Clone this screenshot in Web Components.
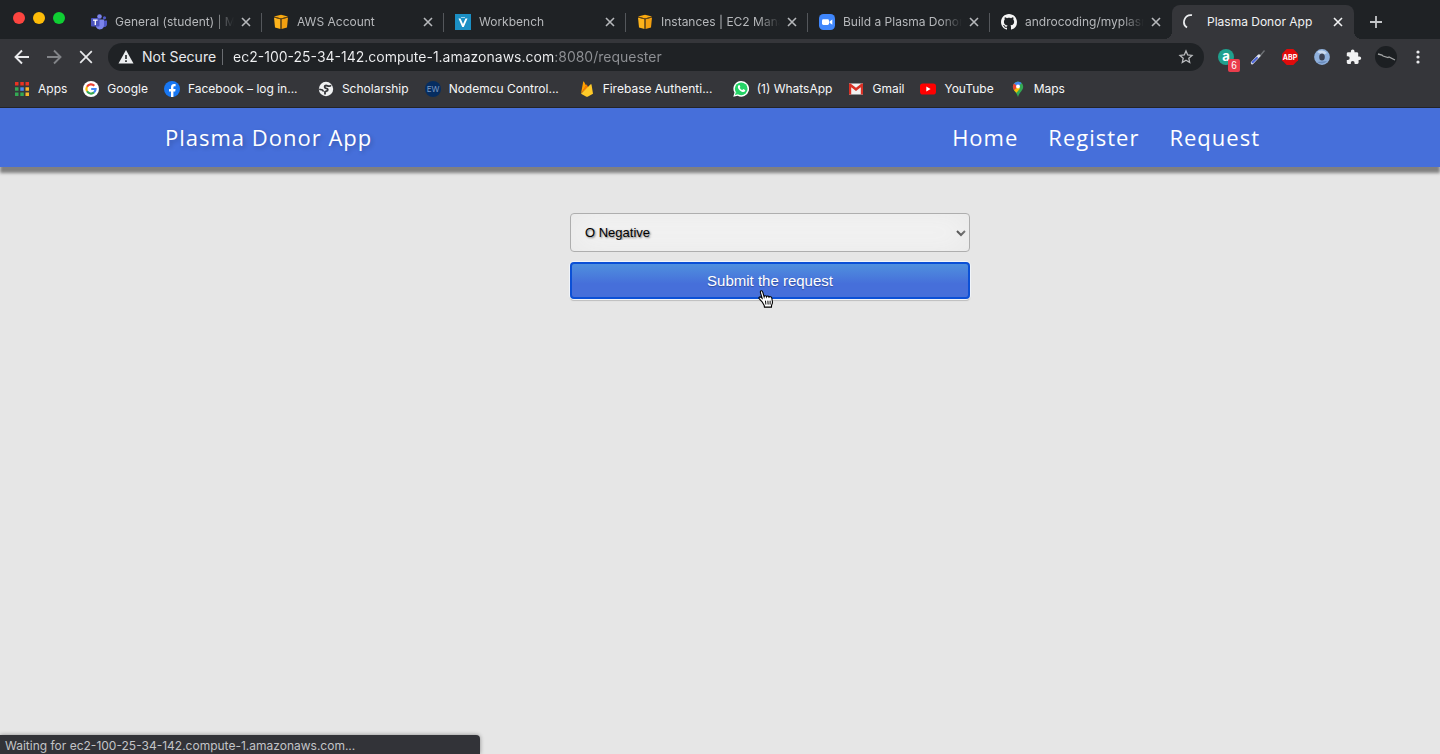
<!DOCTYPE html>
<html lang="en">
<head>
<meta charset="utf-8">
<title>Plasma Donor App</title>
<style>
html, body { margin: 0; height: 100%; }
body { background: #e6e6e6; font-family: Inter, "Liberation Sans", sans-serif; overflow: hidden; }
</style>
</head>
<body>
<browser-window></browser-window>

<template id="t-window">
<style>
:host { display: flex; flex-direction: column; min-height: 100vh; position: relative; }
site-page { flex: 1; }
status-bubble { position: absolute; left: 0; bottom: 0; width: calc(100% / 3); }
</style>
<tab-strip></tab-strip>
<tool-bar></tool-bar>
<bookmark-bar></bookmark-bar>
<site-page></site-page>
<status-bubble>Waiting for ec2-100-25-34-142.compute-1.amazonaws.com...</status-bubble>
</template>

<template id="t-strip">
<style>
:host { display: flex; height: 39px; background: #1f2225; padding-left: 10px; align-items: stretch; }
.lights { display: flex; gap: 8px; width: 70px; padding: 12px 0 0 3px; box-sizing: border-box; flex: none; }
.lights i { width: 12px; height: 12px; border-radius: 50%; background: var(--c); }
button { border: 0; background: none; padding: 0; width: 44px; display: grid; place-items: center; color: #c4c6c9; padding-top: 5px; }
</style>
<div class="lights"><i style="--c:#fc4540"></i><i style="--c:#fdbc08"></i><i style="--c:#0fce33"></i></div>
<browser-tab icon="teams">General (student) | M</browser-tab>
<browser-tab icon="aws">AWS Account</browser-tab>
<browser-tab icon="workbench">Workbench</browser-tab>
<browser-tab icon="aws">Instances | EC2 Mana</browser-tab>
<browser-tab icon="zoom">Build a Plasma Donor</browser-tab>
<browser-tab icon="github" last>androcoding/myplasm</browser-tab>
<browser-tab icon="spin" active>Plasma Donor App</browser-tab>
<button aria-label="New tab"><svg width="14" height="14" viewBox="0 0 14 14" stroke="currentColor" stroke-width="1.8"><path d="M7 1v12M1 7h12"/></svg></button>
</template>

<template id="t-tab">
<style>
:host { display: block; flex: 0 1 182px; min-width: 0; color: #b6b8bb; font-size: 12px; position: relative; }
.tab { display: flex; align-items: center; height: 34px; margin-top: 5px; padding: 0 8px 0 11px; box-sizing: border-box; position: relative; }
.tab::after { content: ""; position: absolute; right: 0; top: 8px; height: 19px; width: 1px; background: #54575b; }
:host([last]) .tab::after, :host([active]) .tab::after { display: none; }
:host([active]) { color: #f1f2f3; }
:host([active]) .tab { background: #35363a; border-radius: 8px 8px 0 0; }
:host([active])::before, :host([active])::after { content: ""; position: absolute; bottom: 0; width: 8px; height: 8px; }
:host([active])::before { left: -8px; background: radial-gradient(circle at 0 0, transparent 8px, #35363a 8px); }
:host([active])::after { right: -8px; background: radial-gradient(circle at 100% 0, transparent 8px, #35363a 8px); }
.title { flex: 1; min-width: 0; margin: 0 4px 0 8px; white-space: nowrap; overflow: hidden; line-height: 18px;
  -webkit-mask-image: linear-gradient(to right, #000 calc(100% - 22px), transparent); mask-image: linear-gradient(to right, #000 calc(100% - 22px), transparent); }
:host([active]) .title { -webkit-mask-image: none; mask-image: none; }
button { border: 0; background: none; padding: 0; color: inherit; width: 16px; height: 16px; display: grid; place-items: center; }
</style>
<div class="tab"><app-icon></app-icon><span class="title"><slot></slot></span>
<button aria-label="Close tab"><svg width="10" height="10" viewBox="0 0 10 10" stroke="currentColor" stroke-width="1.6"><path d="M1 1l8 8M9 1L1 9"/></svg></button></div>
</template>

<template id="t-tool">
<style>
:host { display: flex; align-items: center; height: 36px; background: #35363a; padding: 0 6px; }
button { border: 0; background: none; padding: 0; width: 32px; height: 32px; display: grid; place-items: center; color: #e9eaec; flex: none; position: relative; }
.dim { color: #828488; }
.box { flex: 1; min-width: 0; display: flex; align-items: center; height: 28px; border-radius: 14px; background: #1f2225; margin: 0 6px; color: #e8eaed; font-size: 14px; line-height: 20px; }
.warn { margin: 0 8px 0 10px; flex: none; }
.bar { width: 1px; height: 16px; background: #6a6d71; margin: 0 10px 0 6px; flex: none; }
.sec { white-space: nowrap; }
input { flex: 1; min-width: 0; height: 20px; border: 0; padding: 0; outline: 0; font: inherit; color: #f1f2f4;
  background: linear-gradient(90deg, #f1f2f4 322px, #8f9195 322px); -webkit-background-clip: text; background-clip: text; -webkit-text-fill-color: transparent; }
.box button { width: 36px; height: 28px; }
.badge { position: absolute; right: 2px; bottom: 1px; width: 12px; height: 13px; border-radius: 2px; background: #ea3d4c; color: #fff; font-size: 10px; line-height: 13px; text-align: center; }
</style>
<button aria-label="Back"><svg width="16" height="16" viewBox="0 0 16 16" fill="none" stroke="currentColor" stroke-width="1.9"><path d="M15 8H2M8 1.500L1.500 8 8 14.500"/></svg></button>
<button class="dim" aria-label="Forward"><svg width="16" height="16" viewBox="0 0 16 16" fill="none" stroke="currentColor" stroke-width="1.900"><path d="M1 8h13M8 1.500L14.500 8 8 14.500"/></svg></button>
<button aria-label="Stop loading"><svg width="14" height="14" viewBox="0 0 14 14" stroke="currentColor" stroke-width="1.700"><path d="M1.200 1.200l11.600 11.600M12.800 1.200L1.200 12.800"/></svg></button>
<div class="box">
<svg class="warn" width="16" height="14" viewBox="0 0 16 14"><path fill="#eceef0" d="M8 0l7.500 13.500H.5z"/><path stroke="#1f2225" stroke-width="1.600" d="M8 5v4M8 10.300v1.600"/></svg>
<span class="sec">Not Secure</span><span class="bar"></span>
<input type="text" aria-label="Address" spellcheck="false" value="ec2-100-25-34-142.compute-1.amazonaws.com:8080/requester">
<button aria-label="Bookmark this page"><svg width="16" height="16" viewBox="0 0 16 16" fill="none" stroke="#b9bbbe" stroke-width="1.300"><path d="M8 2l1.700 4 4.300.4-3.200 2.900.9 4.200L8 11.300l-3.700 2.200.9-4.200L2 6.400 6.300 6z"/></svg></button>
</div>
<button aria-label="Amazon Assistant"><app-icon name="assistant"></app-icon><span class="badge">6</span></button>
<button aria-label="Color picker"><app-icon name="dropper"></app-icon></button>
<button aria-label="Adblock Plus"><app-icon name="abp"></app-icon></button>
<button aria-label="Ring extension"><app-icon name="ring"></app-icon></button>
<button aria-label="Extensions"><app-icon name="puzzle"></app-icon></button>
<button aria-label="Profile"><svg width="22" height="22" viewBox="0 0 22 22"><circle cx="11" cy="11" r="11" fill="#1c1f22"/><path d="M3 8l4 1 1 1 5 1.500 1-.5 6 3" fill="none" stroke="#a2a4a5" stroke-width="1.300"/></svg></button>
<button aria-label="Menu"><svg width="4" height="14" viewBox="0 0 4 14" fill="currentColor"><circle cx="2" cy="2" r="1.600"/><circle cx="2" cy="7" r="1.600"/><circle cx="2" cy="12" r="1.600"/></svg></button>
</template>

<template id="t-bookmarks">
<style>
:host { display: flex; height: 33px; background: #35363a; padding: 0 14px 5px; box-sizing: border-box; gap: 16px; align-items: center; border-bottom: 1px solid #232427; overflow: hidden; }
</style>
<book-mark icon="apps">Apps</book-mark>
<book-mark icon="google">Google</book-mark>
<book-mark icon="facebook" long>Facebook – log in...</book-mark>
<book-mark icon="globe">Scholarship</book-mark>
<book-mark icon="ew" long>Nodemcu Control...</book-mark>
<book-mark icon="firebase" long>Firebase Authenti...</book-mark>
<book-mark icon="whatsapp">(1) WhatsApp</book-mark>
<book-mark icon="gmail">Gmail</book-mark>
<book-mark icon="youtube">YouTube</book-mark>
<book-mark icon="maps">Maps</book-mark>
</template>

<template id="t-bookmark">
<style>
:host { display: block; flex: none; font-size: 12px; }
:host([long]) { width: 138px; }
a { display: flex; align-items: center; gap: 8px; color: #f6f7f8; text-decoration: none; line-height: 18px; white-space: nowrap; }
</style>
<a href="#"><app-icon></app-icon><span><slot></slot></span></a>
</template>

<template id="t-site">
<style>
:host { display: block; background: #e6e6e6; }
header { display: flex; justify-content: space-between; align-items: center; height: 59px; padding: 0 calc(12.500% - 15px) 2px; background: #466fda; box-shadow: 0 6px 3px #808080; font: 22px/30px "Open Sans", "Noto Sans", sans-serif; letter-spacing: 1px; box-sizing: border-box; }
a { color: #fff; text-decoration: none; }
.brand { text-shadow: 2px 2px 4px rgba(0,0,0,.2); }
nav { display: flex; gap: 30px; padding-right: 15px; }
main { padding: 46px 0 0 100px; }
form { display: grid; gap: 10px; width: 400px; margin: 0 auto; }
select { appearance: none; height: 39px; border: 1px solid #aeaeae; border-radius: 4px; padding: 0 14px; width: 100%; box-shadow: inset 0 0 30px #e8e8e8; font: 13px "Liberation Sans", Arial, sans-serif; color: #000; text-shadow: 1px 1px 2px rgba(0,0,0,.5);
  background: #f3f3f3 url("data:image/svg+xml,%3Csvg xmlns='http://www.w3.org/2000/svg' width='10' height='8' viewBox='0 0 10 8'%3E%3Cpath d='M1 2l4 4 4-4' fill='none' stroke='%23000' stroke-width='2'/%3E%3C/svg%3E") no-repeat right 3px center; }
button { height: 37px; border: 2px solid #0b50d6; border-radius: 4px; background: linear-gradient(#4f90de, #466fda 60%); color: #fff; font: 15px "Liberation Sans", Arial, sans-serif; padding: 0; box-shadow: 0 0 0 1px #f1f5fa, 0 2px 1px #bdbdbd; text-shadow: 0 1px 1px rgba(0,0,0,.3); }
.submit { position: relative; display: grid; }
.cursor { position: absolute; left: 187px; top: 27px; }
</style>
<header><a class="brand" href="#">Plasma Donor App</a><nav><a href="#">Home</a><a href="#">Register</a><a href="#">Request</a></nav></header>
<main><form>
<select aria-label="Blood group"><option>O Negative</option><option>O Positive</option><option>A Positive</option><option>B Positive</option></select>
<div class="submit"><button type="button">Submit the request</button>
<svg class="cursor" width="18" height="20" viewBox="0 0 16 18"><path d="M4.500 11.500L2 8.800c-1-1 .4-2.200 1.500-1.300l1 .8L3 3.200C2.600 1.300 4.600 1 5 2.600L6.300 7c.3-1.300 2-1.200 2.200 0 .5-1.100 2-.8 2.200.3.700-.8 2.200-.5 2.500.8l.6 3.400c.2 1.400-.5 2.200-.8 3.200l-.1 1.600H6.600l-.2-1.400z" fill="#fff" stroke="#000" stroke-width="1"/><path d="M7.500 10.500l.4 3.500M9.700 10.500l.2 3.500M11.700 10.500v3.500" stroke="#000" stroke-width=".9"/></svg></div>
</form></main>
</template>

<template id="t-status">
<style>
:host { display: block; background: #323338; color: #c3c4c7; font-size: 12px; height: 19px; padding: 2px 5px 0; box-sizing: border-box; border-top-right-radius: 4px; box-shadow: 0 0 4px rgba(0,0,0,.4); white-space: nowrap; }
span { display: block; line-height: 17px; }
</style>
<span role="status"><slot></slot></span>
</template>

<script>
const ICONS = {
teams: '<circle cx="8.500" cy="2.500" r="2.300" fill="#7b83eb"/><circle cx="13.500" cy="3.800" r="1.600" fill="#5059c9"/><path fill="#5059c9" d="M11 6.500h5v4a2.500 2.500 0 0 1-4 2z"/><path fill="#7b83eb" d="M5 5.500h8v6a4.200 4.200 0 0 1-8 1.500z"/><rect y="4" width="8.500" height="8.500" rx="1" fill="#4b53bc"/><path stroke="#fff" stroke-width="1.300" d="M2 6.200h4.600M4.300 6v5"/>',
aws: '<path fill="#f9a90f" d="M1 2.500L8 .8l7 1.700L8 4.500z"/><path fill="#fdb31b" d="M1 3.500l6.500 1.700V15L2 13.600z"/><path fill="#f3a010" d="M15 3.500L8.500 5.200V15l5.500-1.400z"/><path d="M1 3l7 2 7-2M8 5v10" fill="none" stroke="#6b4712" stroke-width=".9"/>',
workbench: '<rect width="16" height="16" fill="#1b8fc4"/><path d="M3.500 4.500h2L8 10l2.500-5.500h2L8.800 13H7.200z" fill="#fff"/><path d="M6 3.500h4" stroke="#9fd3ee"/>',
zoom: '<rect width="16" height="16" rx="4.500" fill="#3f86fb"/><rect x="3" y="5.200" width="7" height="5.800" rx="1.400" fill="#fff"/><path d="M10.500 7.500L13.300 5.500v5.200L10.500 8.800z" fill="#fff"/>',
github: '<path fill="#f5f5f5" d="M8 0C3.580 0 0 3.580 0 8c0 3.540 2.290 6.530 5.470 7.590.4.070.55-.17.55-.38 0-.19-.01-.82-.01-1.490-2.010.37-2.530-.49-2.690-.94-.09-.23-.48-.94-.82-1.130-.28-.15-.68-.52-.01-.53.63-.01 1.080.58 1.230.82.72 1.210 1.870.87 2.330.66.07-.52.28-.87.51-1.070-1.780-.2-3.640-.89-3.640-3.950 0-.87.31-1.590.82-2.150-.08-.2-.36-1.020.08-2.120 0 0 .67-.21 2.200.82.64-.18 1.320-.27 2-.27s1.360.09 2 .27c1.530-1.040 2.200-.82 2.200-.82.44 1.100.16 1.920.08 2.120.51.56.82 1.270.82 2.150 0 3.070-1.870 3.750-3.650 3.950.29.25.54.73.54 1.480 0 1.070-.01 1.930-.01 2.200 0 .21.15.46.55.38A8.010 8.010 0 0 0 16 8c0-4.420-3.580-8-8-8z"/>',
spin: '<path d="M4 13.500A6.800 6.800 0 0 1 9 1.200" fill="none" stroke="#eceef0" stroke-width="1.700"/>',
apps: '<g><path fill="#ea3323" d="M1 1h3.500v3.500H1zM6.300 1h3.500v3.500H6.300zM11.500 1H15v3.500h-3.500z"/><path fill="#34a853" d="M1 6.300h3.500v3.500H1zM1 11.500h3.500V15H1zM6.300 11.500h3.500V15H6.300z"/><path fill="#4a8af4" d="M6.300 6.300h3.500v3.500H6.300z"/><path fill="#f8b52a" d="M11.500 6.300H15v3.500h-3.500zM11.500 11.500H15V15h-3.500z"/></g>',
google: '<circle cx="8" cy="8" r="8" fill="#fff"/><g fill="none" stroke-width="2.200"><path stroke="#ea4335" d="M11.300 4.700A4.600 4.600 0 0 0 4 5.700"/><path stroke="#fbbc05" d="M4 5.700a4.700 4.700 0 0 0 0 4.600"/><path stroke="#34a853" d="M4 10.300a4.600 4.600 0 0 0 7 1.100"/><path stroke="#4285f4" d="M11 11.400A4.600 4.600 0 0 0 12.600 8H8.200"/></g>',
facebook: '<circle cx="8" cy="8" r="8" fill="#1877f2"/><path fill="#fff" d="M7 16v-5.600H5V8h2V6.300c0-2.100 1.200-3.200 3-3.200.8 0 1.600.1 1.600.1v2h-1c-.9 0-1.200.6-1.200 1.200V8h2.200l-.4 2.400H9.400V16z"/>',
globe: '<circle cx="8" cy="8" r="7.200" fill="#f0f1f2"/><path d="M13 4.200c-1.500 2-3.500.2-5 .3-2 .2-1.800 2.500.2 2.800 2.300.2 2 2.600.2 2.800L7 10.800v2.700" fill="none" stroke="#35363a" stroke-width="1.800"/><path d="M1.200 8.200l3.200.8 1.200 1.500" fill="none" stroke="#35363a" stroke-width="1.500"/>',
ew: '<circle cx="8" cy="8" r="8" fill="#062d60"/><text x="8" y="11" text-anchor="middle" font-family="Inter" font-size="8" fill="#7e9ac0">EW</text>',
firebase: '<path fill="#ffa000" d="M2 12.500L4.200.8c.1-.5.6-.5.8-.1L7.200 4.800z"/><path fill="#f57c00" d="M9.300 6.500L7.600 3.200 2 12.500z"/><path fill="#ffca28" d="M14 12.700L12.500 3.500c-.1-.4-.5-.5-.8-.2L2 12.700l5.400 3c.4.200.8.200 1.200 0z"/>',
whatsapp: '<path fill="#fff" d="M8.200 0A7.700 7.700 0 0 0 1.500 11.600L.3 15.800l4.300-1.100A7.800 7.800 0 1 0 8.200 0z"/><circle cx="8.200" cy="7.800" r="6.400" fill="#25d366"/><path d="M2 14l.9-3 2.200 2.200z" fill="#25d366"/><path fill="#fff" d="M5.700 4.200c.5-.4 1-.1 1.100.3l.5 1.200c.1.300-.4.800-.6 1 .6 1.200 1.500 1.900 2.600 2.400l.8-.9c.2-.2.4-.1.6 0l1.400.7c.3.200.1 1.200-.4 1.600-1.100 1-3 .3-4.500-.8C5.700 8.600 4.300 6.500 5 5z"/>',
gmail: '<path fill="#f2f2f2" d="M1 2.500h14v11H1z"/><path fill="#d93025" d="M1 2.500h1.500L8 6.800l5.500-4.300H15v11h-2.200V6.200L8 10 3.200 6.200v7.300H1z"/>',
youtube: '<rect y="2.500" width="16" height="11" rx="2.800" fill="#f00"/><path fill="#fff" d="M6.300 5.600L10.600 8l-4.300 2.400z"/>',
maps: '<path fill="#34a853" d="M2.800 5.800a5.200 5.200 0 0 1 10.400 0C13.200 9.700 9.500 11 8 16 6.500 11 2.800 9.700 2.800 5.800z"/><path fill="#4285f4" d="M3.800 2.800A5.200 5.200 0 0 1 11.500 2L8 5.800z"/><path fill="#ea4335" d="M4 2.500L8 5.800 4.300 9.500C2.400 7.200 2.500 4.400 4 2.500z"/><path fill="#fbbc04" d="M4 9.300L8 5.500l2 2-3.500 4.300C5.700 10.800 4.700 10.300 4 9.300z"/><circle cx="8" cy="5.600" r="2" fill="#fff"/>',
assistant: '<circle cx="8" cy="8" r="8" fill="#1fa18e"/><text x="8" y="12" text-anchor="middle" font-family="Inter" font-weight="700" font-size="13" fill="#fff">a</text>',
dropper: '<path d="M9 7l5-6 1 1-5 6z" fill="#6f7276"/><path d="M2.300 13.800L9 6.800" stroke="#dfe3ee" stroke-width="3" stroke-linecap="round"/><path d="M2.600 13.300L7 8.900" stroke="#4a63d8" stroke-width="2" stroke-linecap="round"/>',
abp: '<path fill="#e00b0b" d="M4.700 0h6.600L16 4.700v6.600L11.300 16H4.700L0 11.300V4.700z"/><text x="8" y="10.600" text-anchor="middle" font-family="Inter" font-weight="700" font-size="7" fill="#fff">ABP</text>',
ring: '<circle cx="8" cy="8" r="7.900" fill="#8fb0dc"/><path d="M3 3a7.500 7.500 0 0 1 10 1L9 6z" fill="#c9daf0"/><path d="M3 13a7.500 7.500 0 0 0 10-1z" fill="#6b8dbd"/><ellipse cx="8" cy="8" rx="2.800" ry="3.600" fill="#3b4254"/>',
puzzle: '<path fill="#f0f1f2" d="M13.200 7.500h-1V4.600c0-.8-.6-1.400-1.400-1.400H8.500v-.9a1.800 1.800 0 0 0-3.600 0v.9H2.200c-.8 0-1.400.6-1.400 1.400v2.600h1a1.900 1.900 0 0 1 0 3.800h-1v2.600c0 .8.600 1.400 1.400 1.400h2.600v-1a1.900 1.900 0 0 1 3.800 0v1h2.600c.8 0 1.400-.6 1.400-1.400v-2.500h.8a1.800 1.800 0 0 0 0-3.600z"/>'
};
const stamp = (host, id) => {
  const root = host.attachShadow({ mode: "open" });
  root.append(document.getElementById(id).content.cloneNode(true));
  return root;
};
customElements.define("app-icon", class extends HTMLElement {
  static observedAttributes = ["name"];
  constructor() { super(); this.attachShadow({ mode: "open" }); }
  attributeChangedCallback() {
    this.shadowRoot.innerHTML = '<style>:host{display:block;flex:none;width:16px;height:16px}svg{display:block}</style><svg width="16" height="16" viewBox="0 0 16 16" aria-hidden="true">' + (ICONS[this.getAttribute("name")] || "") + "</svg>";
  }
});
const define = (tag, id) => customElements.define(tag, class extends HTMLElement {
  connectedCallback() {
    if (this.shadowRoot) return;
    const root = stamp(this, id);
    if (this.hasAttribute("icon")) root.querySelector("app-icon").setAttribute("name", this.getAttribute("icon"));
  }
});
define("browser-tab", "t-tab");
define("book-mark", "t-bookmark");
define("tab-strip", "t-strip");
define("tool-bar", "t-tool");
define("bookmark-bar", "t-bookmarks");
define("site-page", "t-site");
define("status-bubble", "t-status");
define("browser-window", "t-window");
</script>
</body>
</html>
